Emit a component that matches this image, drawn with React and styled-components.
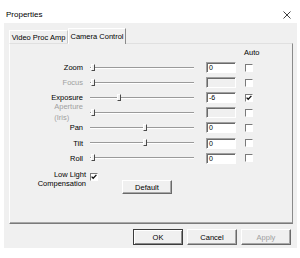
import React from 'react';
import styled, { createGlobalStyle } from 'styled-components';

const Global = createGlobalStyle`
  html, body { margin: 0; padding: 0; background: #ffffff; }
  body { font-family: "Liberation Sans", Arial, sans-serif; color: #000; }
`;

const Window = styled.div`
  margin-left: 4px;
  width: 293px;
  display: flex;
  flex-direction: column;
`;

const TitleBar = styled.div`
  height: 23px;
  box-sizing: border-box;
  display: flex;
  align-items: flex-end;
  justify-content: space-between;
  padding: 0 6px 3px 2px;
  background: #ffffff;
  font-size: 8px;
  line-height: 10px;
`;

const CloseIcon = styled.svg`
  width: 8px;
  height: 8px;
  margin-bottom: 1px;
`;

const Body = styled.div`
  background: #f0f0f0;
  height: 225px;
  box-sizing: border-box;
  padding: 5px 4px 0 5px;
  display: flex;
  flex-direction: column;
  font-size: 7.5px;
`;

const TabStrip = styled.div`
  height: 15px;
  display: flex;
  align-items: flex-end;
`;

const Tab = styled.div`
  position: relative;
  z-index: ${p => (p.$active ? 2 : 1)};
  box-sizing: border-box;
  width: ${p => p.$w}px;
  height: ${p => (p.$active ? 16 : 13)}px;
  margin-bottom: ${p => (p.$active ? -1 : 0)}px;
  background: #f0f0f0;
  border-top: 1px solid #ffffff;
  border-left: 1px solid #ffffff;
  border-right: 1px solid ${p => (p.$active ? '#8a8a8a' : '#c8c8c8')};
  display: flex;
  align-items: center;
  justify-content: center;
  line-height: 9px;
  white-space: nowrap;
`;

const Panel = styled.div`
  position: relative;
  height: 181px;
  box-sizing: border-box;
  border-top: 1px solid #e0e0e0;
  border-left: 1px solid #ffffff;
  border-right: 1px solid #8a8a8a;
  border-bottom: 1px solid #7a7a7a;
  box-shadow: inset 0 -1px 0 #a8a8a8;
  padding-top: 4px;
  display: grid;
  grid-template-columns: 78px 110px 40px 20px;
  grid-template-rows: 12px repeat(7, 15.1px) auto;
  align-content: start;
`;

const AutoHead = styled.div`
  grid-column: 4;
  grid-row: 1;
  margin-left: 6px;
  line-height: 10px;
  align-self: start;
`;

const Label = styled.div`
  grid-column: 1;
  justify-self: end;
  align-self: center;
  padding-right: ${p => p.$pr ?? 5}px;
  line-height: ${p => p.$lh ?? 9}px;
  text-align: ${p => p.$align || 'right'};
  color: ${p => (p.$disabled ? '#a0a0a0' : '#000')};
  white-space: nowrap;
`;

const Slider = styled.div`
  grid-column: 2;
  align-self: center;
  position: relative;
  height: 8px;
  margin: 0 4px 0 2px;
`;

const Track = styled.div`
  margin-top: 3px;
  height: 2px;
  box-sizing: border-box;
  border-top: 1px solid #9a9a9a;
  border-bottom: 1px solid #ffffff;
`;

const Thumb = styled.div`
  position: absolute;
  top: 0;
  width: 4px;
  height: 7px;
  box-sizing: border-box;
  background: #f0f0f0;
  border-top: 1px solid #ffffff;
  border-left: 1px solid #ffffff;
  border-right: 1px solid #4a4a4a;
  border-bottom: 1px solid #4a4a4a;
`;

const Edit = styled.div`
  grid-column: 3;
  align-self: center;
  margin-left: 8px;
  width: 30px;
  height: 11px;
  box-sizing: border-box;
  border-top: 1px solid #a0a0a0;
  border-left: 1px solid #a0a0a0;
  border-right: 1px solid #ffffff;
  border-bottom: 1px solid #ffffff;
  box-shadow: inset 1px 1px 0 #6a6a6a;
  background: ${p => (p.$disabled ? '#f0f0f0' : '#ffffff')};
  font-size: 7px;
  line-height: 9px;
  padding-left: 2px;
`;

const Check = styled.div`
  grid-column: ${p => p.$col || 4};
  align-self: ${p => p.$self || 'center'};
  margin-left: ${p => p.$ml ?? 7}px;
  margin-top: ${p => p.$mt ?? 0}px;
  width: 8px;
  height: 8px;
  box-sizing: border-box;
  border-top: 1px solid #7a7a7a;
  border-left: 1px solid #7a7a7a;
  border-right: 1px solid #ffffff;
  border-bottom: 1px solid #ffffff;
  background: #ffffff;
  display: flex;
  align-items: center;
  justify-content: center;
`;

const CheckMark = () => (
  <svg width="6" height="6" viewBox="0 0 6 6">
    <path d="M0.6 2.6 L2.2 4.3 L5.4 0.9" fill="none" stroke="#111" strokeWidth="1.3" />
  </svg>
);

const ExtraRow = styled.div`
  grid-column: 1 / span 4;
  display: grid;
  grid-template-columns: 78px 110px;
  margin-top: 4px;
`;

const ExtraCell = styled.div`
  display: flex;
  align-items: flex-start;
`;

const Button = styled.button`
  box-sizing: border-box;
  width: 50px;
  height: ${p => p.$h || 16}px;
  margin: 0;
  margin-left: ${p => p.$ml ?? 0}px;
  margin-top: ${p => p.$mt ?? 0}px;
  padding: 0;
  font-family: inherit;
  font-size: 7.5px;
  color: ${p => (p.$disabled ? '#a0a0a0' : '#000')};
  background: #f0f0f0;
  border-style: solid;
  border-width: 1px;
  border-color: ${p => (p.$default ? '#3c3c3c' : '#ffffff #6a6a6a #6a6a6a #ffffff')};
  box-shadow: ${p =>
    p.$default
      ? 'inset 1px 1px 0 #ffffff, inset -1px -1px 0 #8a8a8a'
      : 'inset -1px -1px 0 #a8a8a8'};
  display: flex;
  align-items: center;
  justify-content: center;
`;

const ButtonRow = styled.div`
  margin-top: 5px;
  display: flex;
  justify-content: flex-end;
  gap: 4px;
  padding-right: 2px;
`;

const rows = [
  { label: 'Zoom', value: '0', pos: 0 },
  { label: 'Focus', value: '', pos: 0, disabled: true },
  { label: 'Exposure', value: '-6', pos: 0.27, auto: true },
  { label: ['Aperture', '(Iris)'], value: '', pos: 0, disabled: true },
  { label: 'Pan', value: '0', pos: 0.535 },
  { label: 'Tilt', value: '0', pos: 0.535 },
  { label: 'Roll', value: '0', pos: 0 },
];

const TRACK = 104;
const THUMB = 4;

export default function App() {
  return (
    <>
      <Global />
      <Window>
        <TitleBar>
          <span>Properties</span>
          <CloseIcon viewBox="0 0 8 8">
            <path d="M0.5 0.5 L7.5 7.5 M7.5 0.5 L0.5 7.5" stroke="#2a2a2a" strokeWidth="0.9" fill="none" />
          </CloseIcon>
        </TitleBar>
        <Body>
          <TabStrip>
            <Tab $w={59}>Video Proc Amp</Tab>
            <Tab $w={58} $active>Camera Control</Tab>
          </TabStrip>
          <Panel>
            <AutoHead>Auto</AutoHead>
            {rows.map((r, i) => {
              const gridRow = i + 2;
              const isMulti = Array.isArray(r.label);
              return (
                <React.Fragment key={i}>
                  <Label
                    style={{ gridRow }}
                    $disabled={r.disabled}
                    $align={isMulti ? 'left' : 'right'}
                    $lh={isMulti ? 10.5 : 9}
                  >
                    {isMulti ? (
                      <>
                        {r.label[0]}
                        <br />
                        {r.label[1]}
                      </>
                    ) : (
                      r.label
                    )}
                  </Label>
                  <Slider style={{ gridRow }}>
                    <Track />
                    <Thumb style={{ left: 1 + r.pos * (TRACK - THUMB - 2) }} />
                  </Slider>
                  <Edit style={{ gridRow }} $disabled={r.disabled}>
                    {r.value}
                  </Edit>
                  <Check style={{ gridRow }}>{r.auto && <CheckMark />}</Check>
                </React.Fragment>
              );
            })}
            <ExtraRow style={{ gridRow: 9 }}>
              <Label $pr={2} $lh={9} style={{ alignSelf: 'start' }}>
                Low Light
                <br />
                Compensation
              </Label>
              <ExtraCell>
                <Check $col="auto" $self="start" $ml={2} $mt={3.5}>
                  <CheckMark />
                </Check>
                <Button $h={14} $ml={24} $mt={10.5}>
                  Default
                </Button>
              </ExtraCell>
            </ExtraRow>
          </Panel>
          <ButtonRow>
            <Button $default>OK</Button>
            <Button>Cancel</Button>
            <Button $disabled>Apply</Button>
          </ButtonRow>
        </Body>
      </Window>
    </>
  );
}
